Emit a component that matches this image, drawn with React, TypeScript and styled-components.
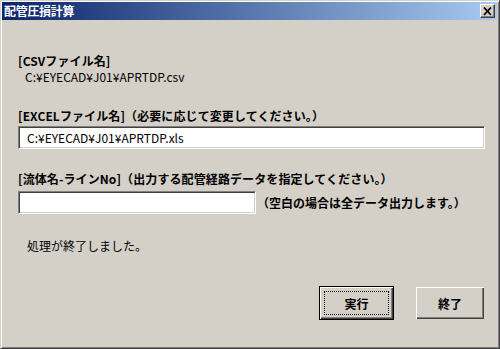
import React from "react";
import styled, { createGlobalStyle } from "styled-components";

const Global = createGlobalStyle`
  html, body { margin: 0; padding: 0; background: #d4d0c8; }
  body { font-family: "Noto Sans CJK JP", "Liberation Sans", sans-serif; font-size: 12px; color: #000; }
  * { box-sizing: border-box; }
`;

const Window = styled.div`
  width: 500px;
  height: 349px;
  background: #d4d0c8;
  border-top: 1px solid #d4d0c8;
  border-left: 1px solid #d4d0c8;
  border-right: 1px solid #404040;
  border-bottom: 1px solid #404040;
  box-shadow: inset 1px 1px 0 #ffffff, inset -1px -1px 0 #808080;
  padding: 1px 2px 2px 1px;
  display: flex;
  flex-direction: column;
  overflow: hidden;
`;

const TitleBar = styled.div`
  height: 18px;
  background: linear-gradient(to right, #0a246a, #a6caf0);
  display: flex;
  align-items: center;
  justify-content: space-between;
  padding: 0 2px 0 2px;
`;

const Title = styled.span`
  color: #fff;
  font-weight: bold;
  font-size: 12px;
  line-height: 16px;
  letter-spacing: -0.3px;
`;

const CloseButton = styled.div`
  width: 15px;
  height: 14px;
  background: #d4d0c8;
  border-top: 1px solid #fff;
  border-left: 1px solid #fff;
  border-right: 1px solid #404040;
  border-bottom: 1px solid #404040;
  box-shadow: inset -1px -1px 0 #808080;
  display: flex;
  align-items: center;
  justify-content: center;
`;

const Content = styled.div`
  flex: 1;
  display: flex;
  flex-direction: column;
  padding: 34px 13px 0 16px;
`;

const Label = styled.div<{ $mt?: number }>`
  font-weight: bold;
  line-height: 14px;
  height: 14px;
  white-space: nowrap;
  letter-spacing: 0.1px;
  margin-top: ${(p) => p.$mt ?? 0}px;
`;

const PlainText = styled.div<{ $mt?: number; $ml?: number }>`
  line-height: 14px;
  height: 14px;
  white-space: nowrap;
  margin-top: ${(p) => p.$mt ?? 0}px;
  margin-left: ${(p) => p.$ml ?? 0}px;
`;

const TextBox = styled.input<{ $w: number; $mt?: number }>`
  width: ${(p) => p.$w}px;
  height: 23px;
  margin: ${(p) => p.$mt ?? 0}px 0 0 0;
  padding: 0 0 0 8px;
  background: #fff;
  font-family: "Noto Sans CJK JP", "Liberation Sans", sans-serif;
  font-size: 12px;
  color: #000;
  border-top: 1px solid #808080;
  border-left: 1px solid #808080;
  border-right: 1px solid #fff;
  border-bottom: 1px solid #fff;
  box-shadow: inset 1px 1px 0 #404040, inset -1px -1px 0 #d4d0c8;
  outline: none;
`;

const Row = styled.div<{ $mt?: number }>`
  display: flex;
  align-items: center;
  margin-top: ${(p) => p.$mt ?? 0}px;
`;

const Hint = styled.span`
  font-weight: bold;
  white-space: nowrap;
  margin-left: 1px;
  letter-spacing: 0px;
`;

const ButtonRow = styled.div`
  display: flex;
  justify-content: flex-end;
  align-items: center;
  gap: 22px;
  margin-top: 33px;
`;

const Button = styled.button<{ $w: number; $h: number; $default?: boolean }>`
  width: ${(p) => p.$w}px;
  height: ${(p) => p.$h}px;
  background: #d4d0c8;
  font-family: "Noto Sans CJK JP", "Liberation Sans", sans-serif;
  font-size: 12px;
  font-weight: bold;
  color: #000;
  padding: 0;
  border: ${(p) => (p.$default ? "1px solid #000" : "none")};
  box-shadow: inset 1px 1px 0 #fff, inset -1px -1px 0 #404040, inset -2px -2px 0 #808080;
  position: relative;
`;

const Focus = styled.span`
  position: absolute;
  inset: 4px;
  border: 1px dotted #000;
`;

const Caption = styled.span`
  position: relative;
`;

export default function App() {
  return (
    <>
      <Global />
      <Window>
        <TitleBar>
          <Title>配管圧損計算</Title>
          <CloseButton>
            <svg width="10" height="9" viewBox="0 0 10 9">
              <path d="M1 0.5 L8 8 M8 0.5 L1 8" stroke="#000" strokeWidth="1.8" />
            </svg>
          </CloseButton>
        </TitleBar>
        <Content>
          <Label>[CSVファイル名]</Label>
          <PlainText $ml={7} $mt={2}>C:¥EYECAD¥J01¥APRTDP.csv</PlainText>
          <Label $mt={25}>[EXCELファイル名]（必要に応じて変更してください。）</Label>
          <TextBox $w={467} $mt={3} defaultValue="C:¥EYECAD¥J01¥APRTDP.xls" />
          <Label $mt={23}>[流体名-ラインNo]（出力する配管経路データを指定してください。）</Label>
          <Row $mt={5}>
            <TextBox $w={238} />
            <Hint>（空白の場合は全データ出力します。）</Hint>
          </Row>
          <PlainText $mt={25} $ml={9}>処理が終了しました。</PlainText>
          <ButtonRow>
            <Button $w={75} $h={34} $default>
              <Focus />
              <Caption>実行</Caption>
            </Button>
            <Button $w={68} $h={32}>
              <Caption>終了</Caption>
            </Button>
          </ButtonRow>
        </Content>
      </Window>
    </>
  );
}
